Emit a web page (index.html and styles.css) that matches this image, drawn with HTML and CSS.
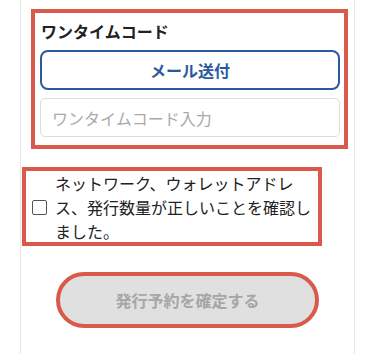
FILE: index.html
```html
<!DOCTYPE html>
<html lang="ja">
<head>
<meta charset="utf-8">
<link rel="stylesheet" href="styles.css">
</head>
<body>
<div class="card">
  <div class="mark otp">
    <div class="otp-title">ワンタイムコード</div>
    <button class="mail-btn">メール送付</button>
    <input class="otp-input" type="text" placeholder="ワンタイムコード入力">
  </div>
  <label class="mark confirm">
    <span class="check"></span>
    <span class="confirm-text">ネットワーク、ウォレットアドレス、発行数量が正しいことを確認しました。</span>
  </label>
  <div class="submit-wrap">
    <button class="submit">発行予約を確定する</button>
  </div>
</div>
</body>
</html>
```

FILE: styles.css
```css
html, body {
  margin: 0;
  padding: 0;
  background: #fff;
  height: 354px;
  overflow: hidden;
}
body {
  font-family: "Noto Sans CJK JP", "Noto Sans", sans-serif;
  color: #222;
}
.card {
  margin-left: 20px;
  width: 333px;
  height: 354px;
  border-left: 1px solid #e6e6e6;
  border-right: 1px solid #e6e6e6;
  padding-top: 9px;
  box-sizing: content-box;
}
.mark {
  border: 4px solid #d95a4a;
  box-sizing: border-box;
}
.otp {
  margin-left: 10px;
  width: 317px;
  height: 140px;
  padding: 7px 4px 0 5px;
  display: flex;
  flex-direction: column;
}
.otp-title {
  font-size: 16px;
  font-weight: 700;
  line-height: 22px;
  padding-left: 1px;
}
.mail-btn {
  margin-top: 8px;
  height: 40px;
  width: 300px;
  border: 2px solid #2c5a9e;
  border-radius: 8px;
  background: #fff;
  color: #2c5a9e;
  font-family: inherit;
  font-size: 16px;
  font-weight: 700;
  padding: 0;
}
.otp-input {
  margin-top: 8px;
  height: 39px;
  width: 300px;
  box-sizing: border-box;
  border: 1px solid #dcdcdc;
  border-radius: 5px;
  padding: 0 11px;
  font-family: inherit;
  font-size: 16px;
  outline: none;
}
.otp-input::placeholder {
  color: #a9a9a9;
}
.confirm {
  margin-top: 18px;
  margin-left: 1px;
  width: 300px;
  height: 79px;
  display: flex;
  align-items: center;
  padding: 0 0 0 6px;
}
.check {
  flex: none;
  width: 15px;
  height: 15px;
  box-sizing: border-box;
  border: 1.5px solid #555;
  border-radius: 2px;
  margin-top: 1px;
}
.confirm-text {
  margin-left: 8px;
  width: 262px;
  font-size: 16px;
  line-height: 24px;
  margin-top: 1px;
}
.submit-wrap {
  display: flex;
  justify-content: center;
  margin-top: 26px;
}
.submit {
  width: 263px;
  height: 56px;
  border: 4px solid #d95a4a;
  border-radius: 28px;
  background: #e0e0e0;
  color: #a6a6a6;
  font-family: inherit;
  font-size: 16px;
  font-weight: 700;
  padding: 0;
}
```
